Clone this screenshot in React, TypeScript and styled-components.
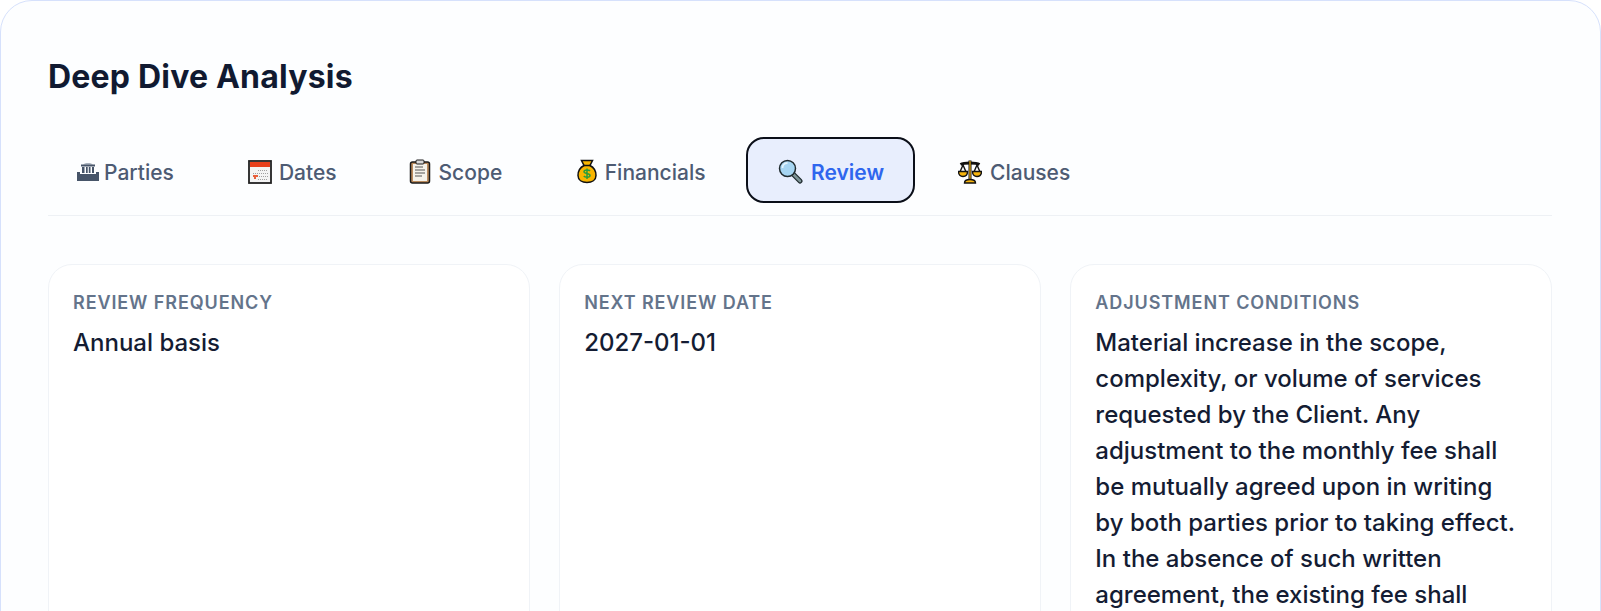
import React from "react";
import styled, { createGlobalStyle } from "styled-components";

const Global = createGlobalStyle`
  html, body { margin: 0; padding: 0; height: 611px; overflow: hidden; background: #fff; }
  * { box-sizing: border-box; }
  body { font-family: Inter, "Liberation Sans", sans-serif; }
`;

const Panel = styled.section`
  width: 1601px;
  min-height: 900px;
  padding: 48px 48px 48px 47px;
  background: #fdfeff;
  border: 1px solid #d6e1fc;
  border-radius: 32px;
`;

const Title = styled.h2`
  margin: 0 0 32px;
  height: 56px;
  line-height: 56px;
  font-size: 32px;
  font-weight: 700;
  color: #111a31;
  letter-spacing: 0.2px;
`;

const TabBar = styled.nav`
  display: flex;
  gap: 8px;
  padding-bottom: 12px;
  margin-bottom: 48px;
  border-bottom: 1px solid #eef1f5;
`;

const Tab = styled.button<{ $active?: boolean }>`
  display: inline-flex;
  align-items: center;
  height: 66px;
  padding: 4px ${(p) => (p.$active ? 29 : 30)}px 0;
  border: 2px solid ${(p) => (p.$active ? "#0b0f19" : "transparent")};
  border-radius: 18px;
  background: ${(p) => (p.$active ? "#e8eefd" : "transparent")};
  color: ${(p) => (p.$active ? "#2f66ee" : "#4d5b73")};
  font: ${(p) => (p.$active ? 600 : 500)} 21px Inter, sans-serif;
  cursor: pointer;
`;

const IconSlot = styled.span<{ $width: number; $shift?: number }>`
  display: inline-flex;
  width: ${(p) => p.$width}px;
  margin-left: ${(p) => p.$shift ?? 0}px;
  margin-top: -1px;
  svg { display: block; }
`;

const Grid = styled.div`
  display: grid;
  grid-template-columns: repeat(3, 1fr);
  gap: 29.5px;
`;

const Card = styled.article`
  min-height: 560px;
  padding: 24px 27px 24px 24px;
  background: #fff;
  border: 1px solid #f0f3f7;
  border-radius: 24px;
`;

const Label = styled.div`
  font-size: 18px;
  line-height: 27px;
  font-weight: 600;
  letter-spacing: 0.9px;
  text-transform: uppercase;
  color: #64748b;
  margin-bottom: 9px;
`;

const Value = styled.p`
  margin: 0;
  font-size: 24px;
  line-height: 36px;
  font-weight: 500;
  color: #141c33;
`;

const Building = () => (
  <svg width="22" height="19" viewBox="0 0 22 19">
    <path d="M6 2.500C8 .8 14 .8 16 2.500z" fill="#8e99aa" />
    <path d="M4 2.500h14v2H4z" fill="#475569" />
    <path d="M5 5h2.500v6H5zM9 5h1.700v6H9zM11.800 5h1.700v6h-1.700zM15 5h2v6h-2z" fill="#475569" />
    <path d="M0 10h3v2h16v-2h3v9H0z" fill="#475569" />
  </svg>
);

const Calendar = () => (
  <svg width="24" height="24" viewBox="0 0 24 24">
    <rect x="1" y="1" width="22" height="22" fill="#f4f4f4" stroke="#222" strokeWidth="1.800" />
    <rect x="2" y="2" width="20" height="5" fill="#e8401c" />
    <g stroke="#a0a0a0" strokeWidth="1" strokeDasharray="1 1">
      <path d="M10 10.500h10M5 13.500h15M5 16.500h15M10 19.500h10" />
    </g>
    <path d="M5 15h5v2H8v2H6v-2H5z" fill="#e8603c" />
  </svg>
);

const Clipboard = () => (
  <svg width="22" height="25" viewBox="0 0 22 25">
    <rect x="1.500" y="3" width="19" height="21" rx="2" fill="#b98a5c" stroke="#1a1a1a" strokeWidth="1.500" />
    <rect x="4" y="5" width="14" height="17" fill="#f5f2ea" />
    <rect x="7" y="1" width="8" height="4" rx="1" fill="#d9d9d9" stroke="#1a1a1a" strokeWidth="1" />
    <path d="M6 8h8M6 11h10M6 14h10M6 17h7" stroke="#555" strokeWidth="1" />
  </svg>
);

const MoneyBag = () => (
  <svg width="20" height="25" viewBox="0 0 20 25">
    <path d="M4.500 1.500h11l-2.500 5c4 2 6 6 6 10 0 4.500-4 7-9 7s-9-2.500-9-7c0-4 2-8 6-10z" fill="#f8b500" stroke="#111" strokeWidth="1.500" />
    <path d="M6 6.500h8" stroke="#111" strokeWidth="1.500" />
    <path d="M13 12c-1-1.500-6-1.500-6 .8 0 2.400 6 1 6 3.600 0 2.300-5 2.200-6.200.6M10 9.500v10.500" stroke="#2a9d3b" strokeWidth="1.500" fill="none" />
  </svg>
);

const Magnifier = () => (
  <svg width="25" height="25" viewBox="0 0 25 25">
    <path d="M15 15l7 7" stroke="#1f2a2e" strokeWidth="5" strokeLinecap="round" />
    <path d="M15 15l7 7" stroke="#7d9496" strokeWidth="2.600" strokeLinecap="round" />
    <circle cx="9.500" cy="9.500" r="8" fill="#a6d5f2" stroke="#1f2a2e" strokeWidth="1.500" />
    <path d="M4.500 9a5 5 0 0 1 5-5" stroke="#e4f4fd" strokeWidth="1.800" fill="none" />
  </svg>
);

const Scales = () => (
  <svg width="24" height="24" viewBox="0 0 24 24">
    <path d="M2.500 4.500C6 2.500 18 2.500 21.500 4.500" stroke="#111" strokeWidth="3" fill="none" />
    <path d="M12 .5v20" stroke="#111" strokeWidth="3" />
    <path d="M12 1v19" stroke="#f6b40e" strokeWidth="1.200" />
    <path d="M6.500 23c0-2.500 2.500-3.500 5.500-3.500s5.500 1 5.500 3.500z" fill="#f6b40e" stroke="#111" strokeWidth="1.400" />
    <path d="M5 5L1.500 13M5 5l3.500 8M19 5l-3.500 8M19 5l3.500 8" stroke="#111" strokeWidth="1.400" />
    <path d="M.5 11.500h9c0 3.500-2 5-4.500 5s-4.500-1.500-4.500-5zM14.500 11.500h9c0 3.500-2 5-4.500 5s-4.500-1.500-4.500-5z" fill="#f6b40e" stroke="#111" strokeWidth="1.400" />
  </svg>
);

const tabs = [
  { name: "Parties", icon: <Building />, width: 27, shift: -3 },
  { name: "Dates", icon: <Calendar />, width: 31, shift: 2 },
  { name: "Scope", icon: <Clipboard />, width: 29.5, shift: 0.5 },
  { name: "Financials", icon: <MoneyBag />, width: 27.5, shift: 3 },
  { name: "Review", icon: <Magnifier />, width: 33.5, shift: 1, active: true },
  { name: "Clauses", icon: <Scales />, width: 32, shift: 3 },
];

const cards = [
  { label: "Review Frequency", value: "Annual basis" },
  { label: "Next Review Date", value: "2027-01-01" },
  {
    label: "Adjustment Conditions",
    value:
      "Material increase in the scope, complexity, or volume of services requested by the Client. Any adjustment to the monthly fee shall be mutually agreed upon in writing by both parties prior to taking effect. In the absence of such written agreement, the existing fee shall remain in effect.",
  },
];

export default function App() {
  return (
    <>
      <Global />
      <Panel>
        <Title>Deep Dive Analysis</Title>
        <TabBar>
          {tabs.map((t) => (
            <Tab key={t.name} $active={t.active}>
              <IconSlot $width={t.width} $shift={t.shift}>{t.icon}</IconSlot>
              {t.name}
            </Tab>
          ))}
        </TabBar>
        <Grid>
          {cards.map((c) => (
            <Card key={c.label}>
              <Label>{c.label}</Label>
              <Value>{c.value}</Value>
            </Card>
          ))}
        </Grid>
      </Panel>
    </>
  );
}
